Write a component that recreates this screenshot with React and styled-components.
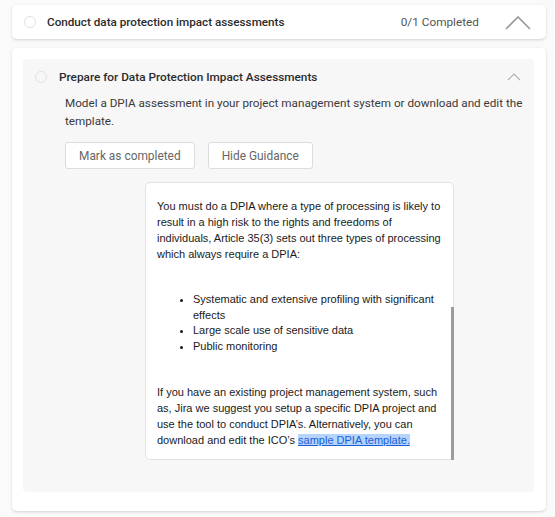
import React from "react";
import styled, { createGlobalStyle } from "styled-components";

const GlobalStyle = createGlobalStyle`
  html, body {
    margin: 0;
    padding: 0;
    background: #fafafa;
    font-family: Roboto, "Liberation Sans", sans-serif;
  }
`;

const Page = styled.div`
  padding: 5px 9px 6px 12px;
  display: flex;
  flex-direction: column;
  gap: 9px;
`;

const Card = styled.div`
  background: #fff;
  border-radius: 5px;
  box-shadow: 0 1px 3px rgba(0, 0, 0, 0.16);
`;

const HeaderCard = styled(Card)`
  height: 34px;
  display: flex;
  align-items: center;
  padding: 0 15px 0 12px;
`;

const Circle = styled.span`
  width: 12px;
  height: 12px;
  border-radius: 50%;
  border: 1px solid #e2e2e2;
  box-sizing: border-box;
  flex: none;
`;

const Title = styled.div`
  margin-left: 11px;
  flex: 1;
  font-size: 11.7px;
  font-weight: 500;
  color: #2b2b2b;
`;

const Progress = styled.div`
  font-size: 11.8px;
  color: #555;
  margin-right: 26px;
`;

const BodyCard = styled(Card)`
  padding: 11px 12px 19px 11px;
`;

const Panel = styled.div`
  background: #f7f7f7;
  border-radius: 4px;
  padding: 8px 13px 32px 12px;
`;

const TaskRow = styled.div`
  display: flex;
  align-items: center;
  height: 20px;
`;

const TaskTitle = styled.div`
  margin-left: 12px;
  flex: 1;
  font-size: 11.8px;
  font-weight: 500;
  color: #2b2b2b;
`;

const Content = styled.div`
  padding-left: 30px;
  margin-right: -8px;
`;

const Description = styled.p`
  margin: 7px 0 0;
  font-size: 11.7px;
  line-height: 18px;
  color: #3a3a3a;
`;

const Buttons = styled.div`
  display: flex;
  gap: 13px;
  margin-top: 12px;
`;

const Button = styled.button`
  height: 27px;
  padding: 0 13px;
  background: #fff;
  border: 1px solid #dcdcdc;
  border-radius: 3px;
  font-family: Roboto, sans-serif;
  font-size: 11.9px;
  color: #666;
`;

const Guidance = styled.div`
  position: relative;
  margin: 13px 0 0 80px;
  width: 309px;
  box-sizing: border-box;
  background: #fff;
  border: 1px solid #e3e3e3;
  border-radius: 5px;
  padding: 15px 12px 11px 11px;
  font-family: "Liberation Sans", Arial, sans-serif;
  font-size: 11px;
  line-height: 16px;
  color: #1a1a1a;

  p {
    margin: 0;
  }
  ul {
    margin: 30px 0;
    padding-left: 36px;
    line-height: 15.5px;
  }
`;

const Thumb = styled.div`
  position: absolute;
  right: -1px;
  top: 124px;
  bottom: -1px;
  width: 3px;
  background: #9c9c9c;
`;

const Link = styled.a`
  color: #1b5fd8;
  text-decoration: underline;
  background: #b5d3fb;
`;

const Chevron = ({ size }) =>
  size === "big" ? (
    <svg width="26" height="15" viewBox="0 0 26 15" fill="none">
      <path d="M1 14 L13 2 L25 14" stroke="#9a9a9a" strokeWidth="1.6" />
    </svg>
  ) : (
    <svg width="14" height="8" viewBox="0 0 14 8" fill="none">
      <path d="M1 7 L7 1 L13 7" stroke="#b0b0b0" strokeWidth="1.1" />
    </svg>
  );

export default function App() {
  return (
    <>
      <GlobalStyle />
      <Page>
        <HeaderCard>
          <Circle />
          <Title>Conduct data protection impact assessments</Title>
          <Progress>0/1 Completed</Progress>
          <Chevron size="big" />
        </HeaderCard>
        <BodyCard>
          <Panel>
            <TaskRow>
              <Circle />
              <TaskTitle>Prepare for Data Protection Impact Assessments</TaskTitle>
              <Chevron />
            </TaskRow>
            <Content>
              <Description>
                Model a DPIA assessment in your project management system or
                download and edit the template.
              </Description>
              <Buttons>
                <Button>Mark as completed</Button>
                <Button>Hide Guidance</Button>
              </Buttons>
              <Guidance>
                <p>
                  You must do a DPIA where a type of processing is likely to
                  result in a high risk to the rights and freedoms of
                  individuals, Article 35(3) sets out three types of processing
                  which always require a DPIA:
                </p>
                <ul>
                  <li>Systematic and extensive profiling with significant effects</li>
                  <li>Large scale use of sensitive data</li>
                  <li>Public monitoring</li>
                </ul>
                <p>
                  If you have an existing project management system, such as,
                  Jira we suggest you setup a specific DPIA project and use the
                  tool to conduct DPIA’s. Alternatively, you can download and
                  edit the ICO’s <Link href="#">sample DPIA template.</Link>
                </p>
                <Thumb />
              </Guidance>
            </Content>
          </Panel>
        </BodyCard>
      </Page>
    </>
  );
}
